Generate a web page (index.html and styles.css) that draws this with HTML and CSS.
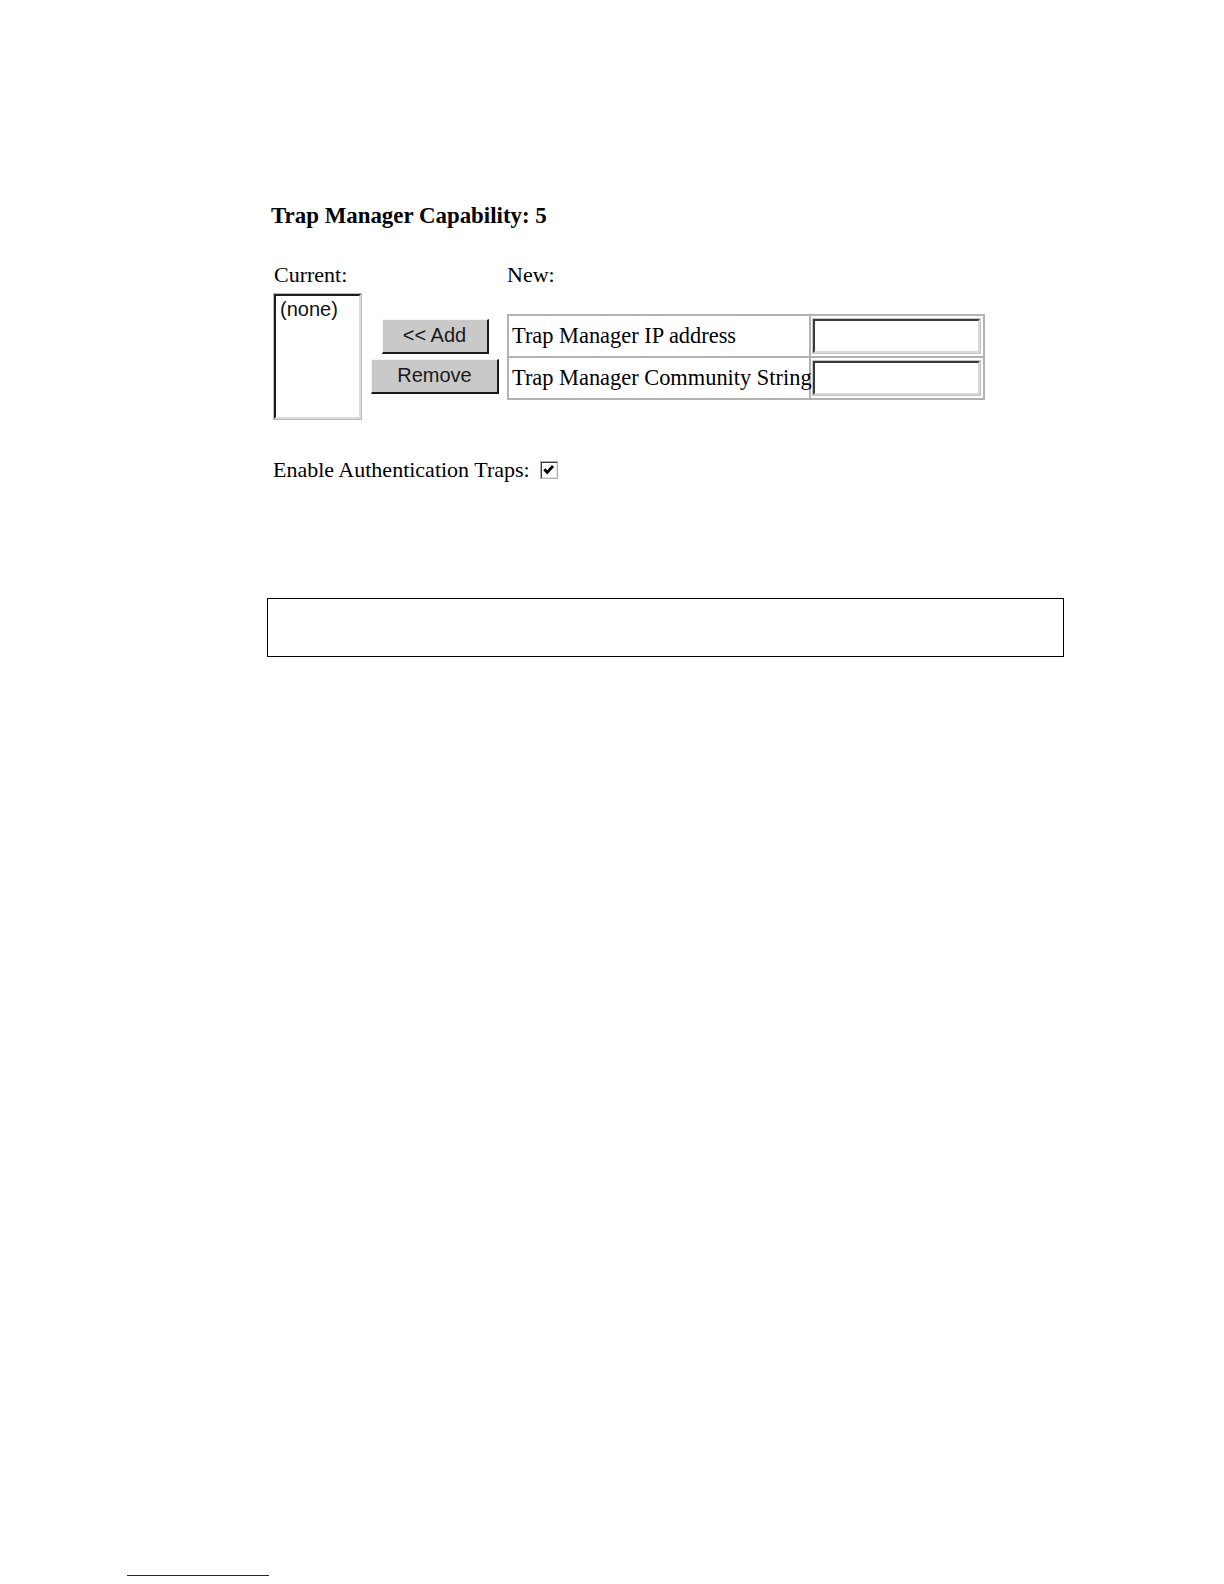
FILE: index.html
```html
<!DOCTYPE html>
<html>
<head>
<meta charset="utf-8">
<title>Trap Manager</title>
<link rel="stylesheet" href="styles.css">
</head>
<body>
<div class="page">
  <h3 class="heading">Trap Manager Capability: 5</h3>
  <div class="form">
    <div class="label label-current">Current:</div>
    <div class="label-spacer"></div>
    <div class="label label-new">New:</div>

    <div class="listbox">
      <div class="listbox-inner">(none)</div>
    </div>
    <div class="buttons">
      <div class="btn btn-add">&lt;&lt; Add</div>
      <div class="btn btn-remove">Remove</div>
    </div>
    <table class="new-table">
      <colgroup>
        <col class="col-label">
        <col class="col-input">
      </colgroup>
      <tr>
        <td class="cell-label">Trap Manager IP address</td>
        <td class="cell-input"><div class="textbox"></div></td>
      </tr>
      <tr>
        <td class="cell-label">Trap Manager Community String</td>
        <td class="cell-input"><div class="textbox"></div></td>
      </tr>
    </table>
  </div>
  <div class="auth">
    <span class="auth-label">Enable Authentication Traps:</span>
    <span class="checkbox">
      <svg width="13" height="13" viewBox="0 0 13 13"><polyline points="2.3,6.2 5.2,9.4 11,3" fill="none" stroke="#000" stroke-width="2.8"/></svg>
    </span>
  </div>
  <div class="message-box"></div>
</div>
<div class="footnote-rule"></div>
</body>
</html>
```

FILE: styles.css
```css
html, body {
  margin: 0;
  padding: 0;
  background: #fff;
}
body {
  font-family: "Liberation Serif", "Times New Roman", serif;
  font-size: 22px;
  color: #000;
}
.page {
  padding: 203px 0 0 271px;
}
.heading {
  margin: 0;
  font-size: 22.9px;
  line-height: 25px;
  font-weight: bold;
}
.form {
  margin-top: 34px;
  margin-left: 2px;
  display: grid;
  grid-template-columns: 89px 128px auto;
  column-gap: 9px;
  row-gap: 6px;
  align-items: center;
  justify-content: start;
}
.label {
  line-height: 25px;
}
.label-current {
  padding-left: 1px;
}
.label-new {
  margin-left: -1px;
}
.listbox {
  width: 89px;
  height: 127px;
  box-sizing: border-box;
  border: 1px solid #b8b8b8;
  background: #fff;
}
.listbox-inner {
  height: 100%;
  box-sizing: border-box;
  border-top: 2px solid #1e1e1e;
  border-left: 2px solid #1e1e1e;
  border-right: 2px solid #dcdcdc;
  border-bottom: 2px solid #dcdcdc;
  padding: 2px 0 0 4px;
  font-family: "Liberation Sans", Arial, sans-serif;
  font-size: 20px;
  line-height: 23px;
  color: #111;
}
.buttons {
  display: flex;
  flex-direction: column;
  align-items: center;
  gap: 5px;
}
.btn {
  height: 35px;
  box-sizing: border-box;
  background: #c9c9c9;
  border-top: 1px solid #f4f4f4;
  border-left: 1px solid #f4f4f4;
  border-right: 2px solid #1a1a1a;
  border-bottom: 2px solid #1a1a1a;
  font-family: "Liberation Sans", Arial, sans-serif;
  font-size: 20px;
  line-height: 31px;
  text-align: center;
  color: #1a1a1a;
}
.btn-add {
  width: 107px;
}
.btn-remove {
  width: 128px;
}
.new-table {
  margin-left: -1px;
  border-collapse: collapse;
  table-layout: fixed;
  width: 476px;
  border: 2px solid #b2b2b2;
}
.col-label {
  width: 302px;
}
.col-input {
  width: 174px;
}
.new-table td {
  border: 2px solid #b2b2b2;
  padding: 0;
  white-space: nowrap;
  overflow: visible;
}
.cell-label {
  font-size: 22.4px;
  padding: 0 0 0 3px !important;
  line-height: 25px;
}
.cell-input {
  padding: 3px 2px !important;
}
.textbox {
  width: 167px;
  height: 34px;
  box-sizing: border-box;
  background: #fff;
  border-top: 2px solid #3a3a3a;
  border-left: 2px solid #3a3a3a;
  border-right: 2px solid #d8d8d8;
  border-bottom: 2px solid #d8d8d8;
  box-shadow: 0 0 0 1px #c4c4c4;
}
.auth {
  margin-top: 37px;
  margin-left: 2px;
  display: flex;
  align-items: center;
  line-height: 25px;
}
.auth-label {
  margin-right: 10px;
}
.checkbox {
  width: 18px;
  height: 18px;
  box-sizing: border-box;
  border: 1px solid #b0b0b0;
  background: #fff;
  display: flex;
  align-items: center;
  justify-content: center;
  box-shadow: inset 1px 1px 0 #3c3c3c, inset -1px -1px 0 #e4e4e4;
}
.checkbox svg {
  display: block;
}
.message-box {
  margin-top: 116px;
  margin-left: -4px;
  width: 797px;
  height: 59px;
  box-sizing: border-box;
  border: 1px solid #000;
}
.footnote-rule {
  margin: 918px 0 0 127px;
  width: 142px;
  height: 1px;
  background: #1a1a80;
}
```
